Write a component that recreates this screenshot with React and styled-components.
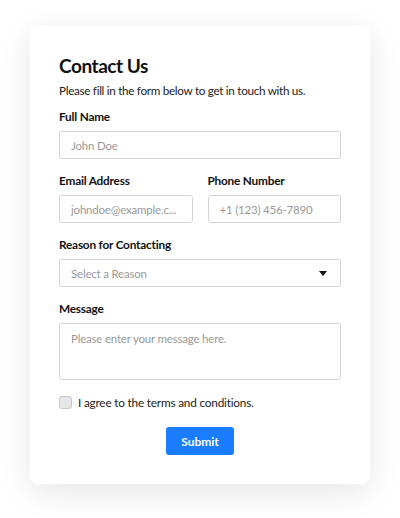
import React from 'react'
import styled, { createGlobalStyle } from 'styled-components'

const GlobalStyle = createGlobalStyle`
  body {
    margin: 0;
    background: #ffffff;
    font-family: Lato, 'Noto Sans', sans-serif;
  }
  * { box-sizing: border-box; }
`

const Page = styled.div`
  padding: 26px 30px 34px;
`

const Card = styled.form`
  background: #fff;
  border-radius: 8px;
  box-shadow: 0 8px 32px rgba(0, 0, 0, 0.1);
  padding: 29px 29px 29px;
  display: flex;
  flex-direction: column;
`

const Title = styled.h1`
  margin: 0;
  font-size: 19px;
  line-height: 22px;
  letter-spacing: -0.45px;
  font-weight: 700;
  color: #111;
`

const Subtitle = styled.p`
  margin: 5px 0 11px;
  font-size: 11.7px;
  line-height: 16px;
  letter-spacing: -0.3px;
  color: #222;
`

const Group = styled.div`
  display: flex;
  flex-direction: column;
  margin-bottom: 14px;
  min-width: 0;
`

const Row = styled.div`
  display: grid;
  grid-template-columns: 1fr 1fr;
  gap: 15px;
`

const Label = styled.label`
  font-size: 11.8px;
  line-height: 16px;
  letter-spacing: -0.2px;
  font-weight: 700;
  color: #111;
  margin-bottom: 6px;
`

const Input = styled.input`
  height: 28px;
  width: 100%;
  border: 1px solid #d4d4d4;
  border-radius: 3px;
  padding: 0 11px;
  font-family: inherit;
  font-size: 11.5px;
  letter-spacing: -0.2px;
  color: #333;
  &::placeholder { color: #9a9a9a; }
`

const SelectBox = styled.div`
  height: 28px;
  border: 1px solid #d4d4d4;
  border-radius: 3px;
  padding: 0 13px 0 11px;
  display: flex;
  align-items: center;
  justify-content: space-between;
  font-size: 11.5px;
  letter-spacing: -0.2px;
  color: #9a9a9a;
`

const TextArea = styled.textarea`
  height: 57px;
  border: 1px solid #d4d4d4;
  border-radius: 3px;
  padding: 8px 11px;
  font-family: inherit;
  font-size: 11.5px;
  letter-spacing: -0.2px;
  resize: none;
  &::placeholder { color: #9a9a9a; }
`

const CheckRow = styled.label`
  display: flex;
  align-items: center;
  gap: 6px;
  margin-top: 1px;
  font-size: 11.8px;
  letter-spacing: -0.2px;
  color: #222;
`

const Box = styled.span`
  width: 13px;
  height: 13px;
  border: 1px solid #c8c8c8;
  border-radius: 3px;
  background: #e6e6e6;
`

const Submit = styled.button`
  align-self: center;
  margin-top: 17px;
  width: 68px;
  height: 28px;
  border: none;
  border-radius: 3px;
  background: #1a7cff;
  color: #fff;
  font-family: inherit;
  font-size: 12px;
  font-weight: 700;
`

const App = () => {
  return (
    <Page>
      <GlobalStyle />
      <Card onSubmit={(e) => e.preventDefault()}>
        <Title>Contact Us</Title>
        <Subtitle>Please fill in the form below to get in touch with us.</Subtitle>
        <Group>
          <Label>Full Name</Label>
          <Input placeholder="John Doe" />
        </Group>
        <Row>
          <Group>
            <Label>Email Address</Label>
            <Input placeholder="johndoe@example.c..." />
          </Group>
          <Group>
            <Label>Phone Number</Label>
            <Input placeholder="+1 (123) 456-7890" />
          </Group>
        </Row>
        <Group>
          <Label>Reason for Contacting</Label>
          <SelectBox>
            Select a Reason
            <svg width="8" height="5" viewBox="0 0 8 5">
              <path d="M0 0h8L4 5z" fill="#111" />
            </svg>
          </SelectBox>
        </Group>
        <Group>
          <Label>Message</Label>
          <TextArea placeholder="Please enter your message here." />
        </Group>
        <CheckRow>
          <Box />
          I agree to the terms and conditions.
        </CheckRow>
        <Submit type="submit">Submit</Submit>
      </Card>
    </Page>
  )
}

export default App
